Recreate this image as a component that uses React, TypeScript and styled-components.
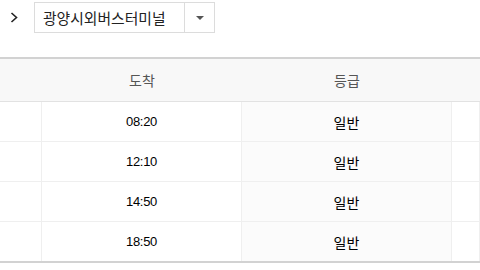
import styled, { createGlobalStyle } from 'styled-components';

const GlobalStyle = createGlobalStyle`
  html, body {
    margin: 0;
    padding: 0;
    background: #ffffff;
    overflow: hidden;
  }
  body {
    font-family: "Noto Sans CJK KR", "Noto Sans", sans-serif;
    color: #222;
  }
`;

const Page = styled.div`
  width: 480px;
  height: 270px;
  overflow: hidden;
`;

const Toolbar = styled.div`
  display: flex;
  align-items: center;
  height: 31px;
  padding: 2px 0 0 10px;
`;

const Chevron = styled.svg`
  width: 8px;
  height: 11px;
  margin-right: 16px;
`;

const Select = styled.div`
  display: flex;
  width: 179px;
  height: 29px;
  border: 1px solid #dcdcdc;
`;

const SelectLabel = styled.div`
  width: 141px;
  padding-left: 8px;
  display: flex;
  align-items: center;
  font-size: 14.8px;
  color: #222;
  border-right: 1px solid #dcdcdc;
  white-space: nowrap;
`;

const SelectArrow = styled.div`
  flex: 1;
  display: flex;
  align-items: center;
  justify-content: center;
`;

const Caret = styled.span`
  width: 0;
  height: 0;
  border-left: 4px solid transparent;
  border-right: 4px solid transparent;
  border-top: 4px solid #555;
  margin-left: 1px;
`;

const Table = styled.div`
  margin-top: 24px;
  border-top: 2px solid #d2d2d2;
  border-bottom: 2px solid #d2d2d2;
  display: grid;
  grid-template-columns: 42px 200px 210px 1fr;
`;

const HeadCell = styled.div`
  height: 42px;
  background: #f8f8f8;
  border-bottom: 1px solid #e2e2e2;
  display: flex;
  align-items: center;
  justify-content: center;
  font-size: 14px;
  color: #555;
`;

const Cell = styled.div<{ $shaded?: boolean, $last?: boolean }>`
  height: 39px;
  border-bottom: ${({ $last }) => ($last ? 'none' : '1px solid #efefef')};
  border-right: 1px solid #efefef;
  background: ${({ $shaded }) => ($shaded ? '#fbfbfb' : '#fff')};
  display: flex;
  align-items: center;
  justify-content: center;
  font-size: 13px;
  color: #111;
`;

const Time = styled.span`
  font-family: "Liberation Sans", Arial, sans-serif;
  font-size: 13px;
  letter-spacing: -0.3px;
  color: #000;
`;

const Grade = styled.span`
  font-size: 14px;
  font-weight: 400;
  color: #000;
`;

const arrivals = ['08:20', '12:10', '14:50', '18:50'];

const App = (): JSX.Element => {
  return (
    <Page>
      <GlobalStyle />
      <Toolbar>
        <Chevron viewBox="0 0 8 11">
          <polyline points="1.5,1 6.5,5.5 1.5,10" fill="none" stroke="#222" strokeWidth="1.6" />
        </Chevron>
        <Select>
          <SelectLabel>광양시외버스터미널</SelectLabel>
          <SelectArrow><Caret /></SelectArrow>
        </Select>
      </Toolbar>
      <Table>
        <HeadCell />
        <HeadCell>도착</HeadCell>
        <HeadCell>등급</HeadCell>
        <HeadCell />
        {arrivals.map((t, i) => {
          const last = i === arrivals.length - 1;
          return [
            <Cell key={`a${i}`} $last={last} />,
            <Cell key={`b${i}`} $last={last}><Time>{t}</Time></Cell>,
            <Cell key={`c${i}`} $last={last} $shaded><Grade>일반</Grade></Cell>,
            <Cell key={`d${i}`} $last={last} />
          ];
        })}
      </Table>
    </Page>
  );
};

export default App;
